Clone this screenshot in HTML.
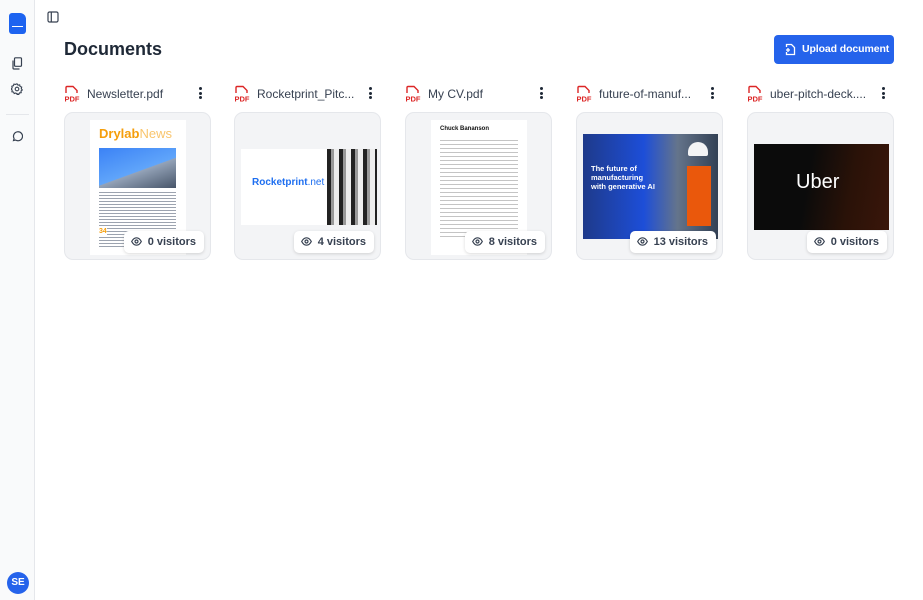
<!DOCTYPE html>
<html><head><meta charset="utf-8"><style>
*{box-sizing:border-box;margin:0;padding:0}
body{width:923px;height:600px;background:#fff;font-family:"Liberation Sans",sans-serif;position:relative;overflow:hidden;color:#1f2937}
.side{position:absolute;left:0;top:0;width:35px;height:600px;background:#f9fafb;border-right:1px solid #e5e7eb}
.logo{position:absolute;left:9px;top:13px;width:17px;height:21px;background:#1d63f0;border-radius:3px 6px 3px 3px}
.logo:after{content:"";position:absolute;left:3px;top:13px;width:11px;height:1px;background:#fff}
.av{position:absolute;left:7px;top:572px;width:22px;height:22px;border-radius:50%;background:#2563eb;color:#fff;font-size:10px;font-weight:bold;text-align:center;line-height:22px}
h1{position:absolute;left:64px;top:39px;font-size:18px;font-weight:bold;color:#1f2937}
.btn{position:absolute;left:774px;top:35px;width:120px;height:29px;background:#2563eb;border-radius:4px;color:#fff;font-size:10.5px;font-weight:bold;line-height:29px;padding-left:28px;white-space:nowrap;letter-spacing:-0.1px}
.hdr{position:absolute;top:85px;height:18px;width:147px;font-size:12px;color:#374151;white-space:nowrap}
.hdr .t{position:absolute;left:23px;top:2px}
.pdf{position:absolute;left:0;top:0;width:16px;height:18px}
.dots{position:absolute;right:9px;top:2px;width:3px}
.dots i{display:block;width:3px;height:3px;background:#1f2937;border-radius:50%;margin-bottom:1.5px}
.card{position:absolute;top:112px;width:147px;height:148px;background:#f3f4f6;border:1px solid #e5e7eb;border-radius:9px;overflow:hidden}
.th{position:absolute}
.vis{position:absolute;right:6px;bottom:6px;height:22px;background:#fff;border-radius:5px;box-shadow:0 1px 3px rgba(0,0,0,.15);font-size:11px;font-weight:bold;color:#374151;line-height:22px;padding:0 8px 0 24px}
.vis svg{position:absolute;left:7px;top:6px}
</style></head><body>
<div class="side">
<div class="logo"></div>
<svg style="position:absolute;left:11px;top:57px" width="12" height="13" viewBox="0 0 12 13" fill="none" stroke="#374151" stroke-width="1.2"><rect x="3.5" y="0.8" width="7" height="8.5" rx="1"/><path d="M2 3.5v7.5a1 1 0 0 0 1 1h5.5"/></svg>
<svg style="position:absolute;left:11px;top:83px" width="12" height="12" viewBox="0 0 12 12" fill="none" stroke="#374151" stroke-width="1.1"><circle cx="6" cy="6" r="1.8"/><path d="M6 0.8l1 1.4 1.7-.3.4 1.6 1.6.6-.4 1.6 1 1.3-1.3 1 .2 1.7-1.7.2-.7 1.5-1.6-.6L6 11.2 4.8 10l-1.6.6-.6-1.5L.9 8.8l.3-1.7L0 6l1.2-1.2-.4-1.6 1.7-.5.4-1.6 1.7.3z"/></svg>
<div style="position:absolute;left:6px;top:114px;width:23px;height:1px;background:#e5e7eb"></div>
<svg style="position:absolute;left:11px;top:130px" width="12" height="12" viewBox="0 0 12 12" fill="none" stroke="#374151" stroke-width="1.2"><path d="M2.5 10.5l.6-2A4.5 4.5 0 1 1 4.5 10z"/></svg>
<div class="av">SE</div>
</div>
<svg style="position:absolute;left:47px;top:11px" width="12" height="12" viewBox="0 0 12 12" fill="none" stroke="#374151" stroke-width="1.2"><rect x="1" y="1" width="10" height="10" rx="1.5"/><path d="M4.3 1v10"/></svg>
<h1>Documents</h1>
<div class="btn"><svg style="position:absolute;left:11px;top:8px" width="11" height="13" viewBox="0 0 11 13" fill="none" stroke="#fff" stroke-width="1.3"><path d="M1.5 4V1.5h5l3 3v7h-8V9"/><path d="M3 5v4M1 7h4"/></svg>Upload document</div>

<div class="hdr" style="left:64px"><svg class="pdf" viewBox="0 0 16 18"><path d="M2 8V2.5A1 1 0 0 1 3 1.5h6l4 4V8" fill="none" stroke="#dc2626" stroke-width="1.4"/><text x="0.5" y="16.5" font-size="7.5" font-weight="bold" fill="#dc2626" font-family="Liberation Sans">PDF</text></svg><span class="t">Newsletter.pdf</span><span class="dots"><i></i><i></i><i></i></span></div>
<div class="hdr" style="left:234px"><svg class="pdf" viewBox="0 0 16 18"><path d="M2 8V2.5A1 1 0 0 1 3 1.5h6l4 4V8" fill="none" stroke="#dc2626" stroke-width="1.4"/><text x="0.5" y="16.5" font-size="7.5" font-weight="bold" fill="#dc2626" font-family="Liberation Sans">PDF</text></svg><span class="t">Rocketprint_Pitc...</span><span class="dots"><i></i><i></i><i></i></span></div>
<div class="hdr" style="left:405px"><svg class="pdf" viewBox="0 0 16 18"><path d="M2 8V2.5A1 1 0 0 1 3 1.5h6l4 4V8" fill="none" stroke="#dc2626" stroke-width="1.4"/><text x="0.5" y="16.5" font-size="7.5" font-weight="bold" fill="#dc2626" font-family="Liberation Sans">PDF</text></svg><span class="t">My CV.pdf</span><span class="dots"><i></i><i></i><i></i></span></div>
<div class="hdr" style="left:576px"><svg class="pdf" viewBox="0 0 16 18"><path d="M2 8V2.5A1 1 0 0 1 3 1.5h6l4 4V8" fill="none" stroke="#dc2626" stroke-width="1.4"/><text x="0.5" y="16.5" font-size="7.5" font-weight="bold" fill="#dc2626" font-family="Liberation Sans">PDF</text></svg><span class="t">future-of-manuf...</span><span class="dots"><i></i><i></i><i></i></span></div>
<div class="hdr" style="left:747px"><svg class="pdf" viewBox="0 0 16 18"><path d="M2 8V2.5A1 1 0 0 1 3 1.5h6l4 4V8" fill="none" stroke="#dc2626" stroke-width="1.4"/><text x="0.5" y="16.5" font-size="7.5" font-weight="bold" fill="#dc2626" font-family="Liberation Sans">PDF</text></svg><span class="t">uber-pitch-deck....</span><span class="dots"><i></i><i></i><i></i></span></div>

<div class="card" style="left:64px">
<div class="th" style="left:25px;top:7px;width:96px;height:135px;background:#fff">
<div style="position:absolute;left:9px;top:6px;font-size:13px;font-weight:bold;color:#f59e0b">Drylab<span style="font-weight:normal;opacity:.6">News</span></div>
<div style="position:absolute;left:9px;top:28px;width:77px;height:40px;background:linear-gradient(160deg,#3b82f6,#60a5fa 55%,#94a3b8 56%,#475569)"></div>
<div style="position:absolute;left:9px;top:72px;width:77px;height:55px;background:repeating-linear-gradient(#9ca3af 0 1px,#fff 1px 3px)"></div>
<div style="position:absolute;left:9px;top:108px;font-size:7px;font-weight:bold;color:#f59e0b;background:#fff">34</div>
</div>
<div class="vis"><svg width="11" height="9" viewBox="0 0 11 9" fill="none" stroke="#374151" stroke-width="1.2"><path d="M.7 4.5C2 2 3.6.8 5.5.8S9 2 10.3 4.5C9 7 7.4 8.2 5.5 8.2S2 7 .7 4.5z"/><circle cx="5.5" cy="4.5" r="1.5"/></svg>0 visitors</div>
</div>
<div class="card" style="left:234px">
<div class="th" style="left:6px;top:36px;width:136px;height:76px;background:#fff">
<div style="position:absolute;left:11px;top:28px;font-size:10px;font-weight:bold;color:#1d6ef0">Rocketprint<span style="font-weight:normal">.net</span></div>
<div style="position:absolute;left:86px;top:0;width:50px;height:76px;background:repeating-linear-gradient(90deg,#222 0 4px,#999 4px 7px,#eee 7px 12px)"></div>
</div>
<div class="vis"><svg width="11" height="9" viewBox="0 0 11 9" fill="none" stroke="#374151" stroke-width="1.2"><path d="M.7 4.5C2 2 3.6.8 5.5.8S9 2 10.3 4.5C9 7 7.4 8.2 5.5 8.2S2 7 .7 4.5z"/><circle cx="5.5" cy="4.5" r="1.5"/></svg>4 visitors</div>
</div>
<div class="card" style="left:405px">
<div class="th" style="left:25px;top:7px;width:96px;height:135px;background:#fff">
<div style="position:absolute;left:9px;top:6px;font-size:6px;font-weight:bold;color:#111">Chuck Bananson</div>
<div style="position:absolute;left:9px;top:20px;width:78px;height:100px;background:repeating-linear-gradient(#c4c4c4 0 1px,#fff 1px 4px)"></div>
</div>
<div class="vis"><svg width="11" height="9" viewBox="0 0 11 9" fill="none" stroke="#374151" stroke-width="1.2"><path d="M.7 4.5C2 2 3.6.8 5.5.8S9 2 10.3 4.5C9 7 7.4 8.2 5.5 8.2S2 7 .7 4.5z"/><circle cx="5.5" cy="4.5" r="1.5"/></svg>8 visitors</div>
</div>
<div class="card" style="left:576px">
<div class="th" style="left:6px;top:21px;width:135px;height:105px;background:linear-gradient(90deg,#1e3a8a 0,#1d4ed8 45%,#64748b 70%,#334155)">
<div style="position:absolute;left:8px;top:30px;font-size:7.5px;font-weight:bold;color:#fff;line-height:9px">The future of<br>manufacturing<br>with generative AI</div>
<div style="position:absolute;left:104px;top:32px;width:24px;height:60px;background:#ea580c"></div>
<div style="position:absolute;left:105px;top:8px;width:20px;height:14px;border-radius:10px 10px 2px 2px;background:#f3f4f6"></div>
</div>
<div class="vis"><svg width="11" height="9" viewBox="0 0 11 9" fill="none" stroke="#374151" stroke-width="1.2"><path d="M.7 4.5C2 2 3.6.8 5.5.8S9 2 10.3 4.5C9 7 7.4 8.2 5.5 8.2S2 7 .7 4.5z"/><circle cx="5.5" cy="4.5" r="1.5"/></svg>13 visitors</div>
</div>
<div class="card" style="left:747px">
<div class="th" style="left:6px;top:31px;width:135px;height:86px;background:linear-gradient(100deg,#0b0b0b 40%,#2a1208 70%,#3a160a)">
<div style="position:absolute;left:42px;top:27px;font-size:20px;color:#fff">Uber</div>
</div>
<div class="vis"><svg width="11" height="9" viewBox="0 0 11 9" fill="none" stroke="#374151" stroke-width="1.2"><path d="M.7 4.5C2 2 3.6.8 5.5.8S9 2 10.3 4.5C9 7 7.4 8.2 5.5 8.2S2 7 .7 4.5z"/><circle cx="5.5" cy="4.5" r="1.5"/></svg>0 visitors</div>
</div>
</body></html>
